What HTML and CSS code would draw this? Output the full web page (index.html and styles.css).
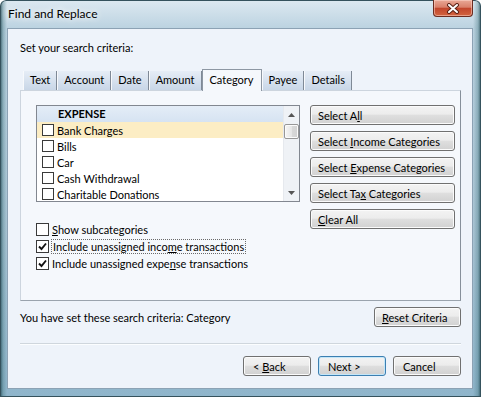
FILE: index.html
```html
<!DOCTYPE html>
<html lang="en">
<head>
  <meta charset="UTF-8">
  <title>Find and Replace</title>
  <link rel="stylesheet" href="styles.css">
</head>
<body>
  <div class="window">
    <div class="titlebar">
      <span class="title">Find and Replace</span>
      <span class="close-btn">
        <svg width="14" height="11" viewBox="0 0 14 11">
          <path d="M3 2 L11 9 M11 2 L3 9" stroke="#5b2216" stroke-width="4" stroke-linecap="round"/>
          <path d="M3 2 L11 9 M11 2 L3 9" stroke="#fff" stroke-width="2" stroke-linecap="round"/>
        </svg>
      </span>
    </div>

    <div class="client">
      <p class="prompt">Set your search criteria:</p>

      <div class="tabs">
        <span class="tab">Text</span>
        <span class="tab">Account</span>
        <span class="tab">Date</span>
        <span class="tab">Amount</span>
        <span class="tab tab-selected">Category</span>
        <span class="tab">Payee</span>
        <span class="tab">Details</span>
      </div>

      <div class="panel">
        <div class="list-col">
          <div class="listbox">
            <div class="list-items">
              <div class="list-head">EXPENSE</div>
              <div class="list-item is-current"><span class="cb cb-small"></span>Bank Charges</div>
              <div class="list-item"><span class="cb cb-small"></span>Bills</div>
              <div class="list-item"><span class="cb cb-small"></span>Car</div>
              <div class="list-item"><span class="cb cb-small"></span>Cash Withdrawal</div>
              <div class="list-item"><span class="cb cb-small"></span>Charitable Donations</div>
            </div>
            <div class="scrollbar">
              <span class="sb-arrow">
                <svg width="7" height="4" viewBox="0 0 7 4"><path d="M0 4 L3.5 0 L7 4 Z" fill="#555"/></svg>
              </span>
              <span class="sb-thumb"></span>
              <span class="sb-track"></span>
              <span class="sb-arrow">
                <svg width="7" height="4" viewBox="0 0 7 4"><path d="M0 0 L3.5 4 L7 0 Z" fill="#555"/></svg>
              </span>
            </div>
          </div>

          <div class="options">
            <div class="option"><span class="cb"></span><span><u>S</u>how subcategories</span></div>
            <div class="option">
              <span class="cb"><svg width="9" height="9" viewBox="0 0 9 9"><path d="M1 4.5 L3.5 7 L8 1.5" fill="none" stroke="#111" stroke-width="1.9"/></svg></span>
              <span class="focus">Include unassigned inco<u>m</u>e transactions</span>
            </div>
            <div class="option">
              <span class="cb"><svg width="9" height="9" viewBox="0 0 9 9"><path d="M1 4.5 L3.5 7 L8 1.5" fill="none" stroke="#111" stroke-width="1.9"/></svg></span>
              <span>Include unassigned expe<u>n</u>se transactions</span>
            </div>
          </div>
        </div>

        <div class="side-buttons">
          <button class="btn">Select A<u>l</u>l</button>
          <button class="btn">Select <u>I</u>ncome Categories</button>
          <button class="btn">Select <u>E</u>xpense Categories</button>
          <button class="btn">Select Ta<u>x</u> Categories</button>
          <button class="btn"><u>C</u>lear All</button>
        </div>
      </div>

      <div class="status-row">
        <span>You have set these search criteria: Category</span>
        <button class="btn btn-reset"><u>R</u>eset Criteria</button>
      </div>

      <div class="separator"></div>

      <div class="nav-buttons">
        <button class="btn btn-nav">&lt; <u>B</u>ack</button>
        <button class="btn btn-nav btn-default">Next &gt;</button>
        <button class="btn btn-nav">Cancel</button>
      </div>
    </div>
  </div>
</body>
</html>
```

FILE: styles.css
```css
:root {
  --ui-font: "Lato", "Segoe UI", sans-serif;
  --client-bg: #eef3fa;
  --panel-bg: #f5f8fc;
  --btn-border: #707070;
}

* {
  box-sizing: border-box;
  margin: 0;
  padding: 0;
}

body {
  width: 481px;
  height: 397px;
  overflow: hidden;
  font-family: var(--ui-font);
  font-size: 11px;
  color: #000;
  white-space: nowrap;
}

u {
  text-underline-offset: 1px;
}

/* window frame */
.window {
  width: 481px;
  height: 397px;
  display: flex;
  flex-direction: column;
  padding: 0 8px 8px 7px;
  border-radius: 6px 6px 0 0;
  background:
    linear-gradient(to right, rgba(25, 65, 75, 0.8) 0, rgba(70, 120, 130, 0.4) 3px, transparent 7px, transparent calc(100% - 8px), rgba(70, 120, 130, 0.4) calc(100% - 3px), rgba(25, 65, 75, 0.8) 100%),
    linear-gradient(to bottom, #dde9f1 0, #bcd3e1 28px, #aac5d5 60%, #8fb5cb 100%);
  box-shadow: inset 0 0 0 1px #35525d;
}

.titlebar {
  height: 28px;
  display: flex;
  justify-content: space-between;
  align-items: flex-start;
  padding-left: 1px;
}

.title {
  line-height: 28px;
  font-size: 12px;
  text-shadow: 0 0 6px #fff, 0 0 10px #fff;
}

.close-btn {
  width: 40px;
  height: 17px;
  display: flex;
  align-items: center;
  justify-content: center;
  border: 1px solid #6b2c20;
  border-top: none;
  border-radius: 0 0 4px 4px;
  background: linear-gradient(to bottom, #e9a896 0, #d9806a 45%, #c2462c 52%, #d2643f 100%);
  box-shadow: inset 0 0 0 1px rgba(255, 220, 210, 0.5);
}

/* client area */
.client {
  flex: 1;
  display: flex;
  flex-direction: column;
  padding: 0 11px 0 12px;
  background: var(--client-bg);
  border: 1px solid #8ca2b4;
}

.prompt {
  margin-top: 11px;
  line-height: 16px;
}

.tabs {
  display: flex;
  align-items: flex-end;
  height: 21px;
  margin-top: 13px;
  padding-left: 3px;
}

.tab {
  height: 19px;
  line-height: 18px;
  padding: 0 6px;
  background: linear-gradient(to bottom, #e6edf6, #c8d6e7);
  border-left: 1px solid #f7f9fc;
  border-right: 1px solid #7f8996;
}

.tab-selected {
  position: relative;
  height: 22px;
  margin-bottom: -1px;
  line-height: 20px;
  padding: 0 7px;
  background: var(--panel-bg);
  border: 1px solid #8d97a3;
  border-bottom: none;
}

.panel {
  height: 211px;
  display: grid;
  grid-template-columns: 264px 145px;
  column-gap: 10px;
  align-items: start;
  padding: 14px 5px 0 15px;
  background: var(--panel-bg);
  border: 1px solid;
  border-color: #cdd5de #858f9a #9aa3ad #cdd5de;
}

/* category list */
.list-col {
  display: flex;
  flex-direction: column;
}

.listbox {
  height: 97px;
  display: flex;
  background: #fff;
  border: 1px solid #828790;
}

.list-items {
  flex: 1;
  overflow: hidden;
}

.list-head {
  height: 16px;
  line-height: 16px;
  padding-left: 21px;
  font-weight: 700;
  background: linear-gradient(to bottom, #e4edf7, #d6e3f2);
}

.list-item {
  height: 16px;
  display: flex;
  align-items: center;
  gap: 3px;
  padding-left: 5px;
}

.list-item.is-current {
  background: #fcedc4;
}

.scrollbar {
  width: 16px;
  display: flex;
  flex-direction: column;
  align-items: center;
  background: #eff2f6;
  border-left: 1px solid #e6e9ee;
}

.sb-arrow {
  height: 17px;
  display: flex;
  align-items: center;
  justify-content: center;
}

.sb-thumb {
  width: 15px;
  height: 15px;
  margin-top: 1px;
  border: 1px solid #979797;
  border-radius: 2px;
  background: linear-gradient(to right, #f6f6f6, #e6e6e6 50%, #d9d9d9 51%, #d2d2d2);
  box-shadow: inset 0 0 0 1px #fbfbfb;
}

.sb-track {
  flex: 1;
}

/* checkboxes */
.cb {
  width: 13px;
  height: 13px;
  flex: none;
  display: flex;
  align-items: center;
  justify-content: center;
  background: #fff;
  border: 1px solid #3a3a3a;
}

.cb-small {
  width: 12px;
  height: 12px;
}

.options {
  margin-top: 19px;
}

.option {
  height: 17px;
  display: flex;
  align-items: center;
  gap: 3px;
}

.focus {
  line-height: 13px;
  padding: 0 1px;
  outline: 1px dotted #6a6a6a;
}

/* buttons */
.btn {
  height: 20px;
  padding: 0 7px;
  font-family: var(--ui-font);
  font-size: 11px;
  color: #000;
  text-align: left;
  white-space: nowrap;
  border: 1px solid var(--btn-border);
  border-radius: 3px;
  background: linear-gradient(to bottom, #f3f3f3 0, #ececec 45%, #dedede 52%, #d1d1d1 100%);
  box-shadow: inset 0 0 0 1px #fbfbfb;
}

.side-buttons {
  display: flex;
  flex-direction: column;
  gap: 6px;
}

.status-row {
  height: 20px;
  margin-top: 6px;
  display: flex;
  justify-content: space-between;
  align-items: center;
}

.btn-reset {
  width: 87px;
}

.separator {
  height: 2px;
  margin-top: 16px;
  border-top: 1px solid #cfd6dd;
  border-bottom: 1px solid #fbfdff;
}

.nav-buttons {
  margin-top: 11px;
  display: flex;
  justify-content: flex-end;
  gap: 7px;
}

.btn-nav {
  width: 68px;
  padding-left: 9px;
}

.btn-default {
  border-color: #3c7fb1;
  box-shadow: inset 0 0 0 1px #c3e6f9;
}
```
